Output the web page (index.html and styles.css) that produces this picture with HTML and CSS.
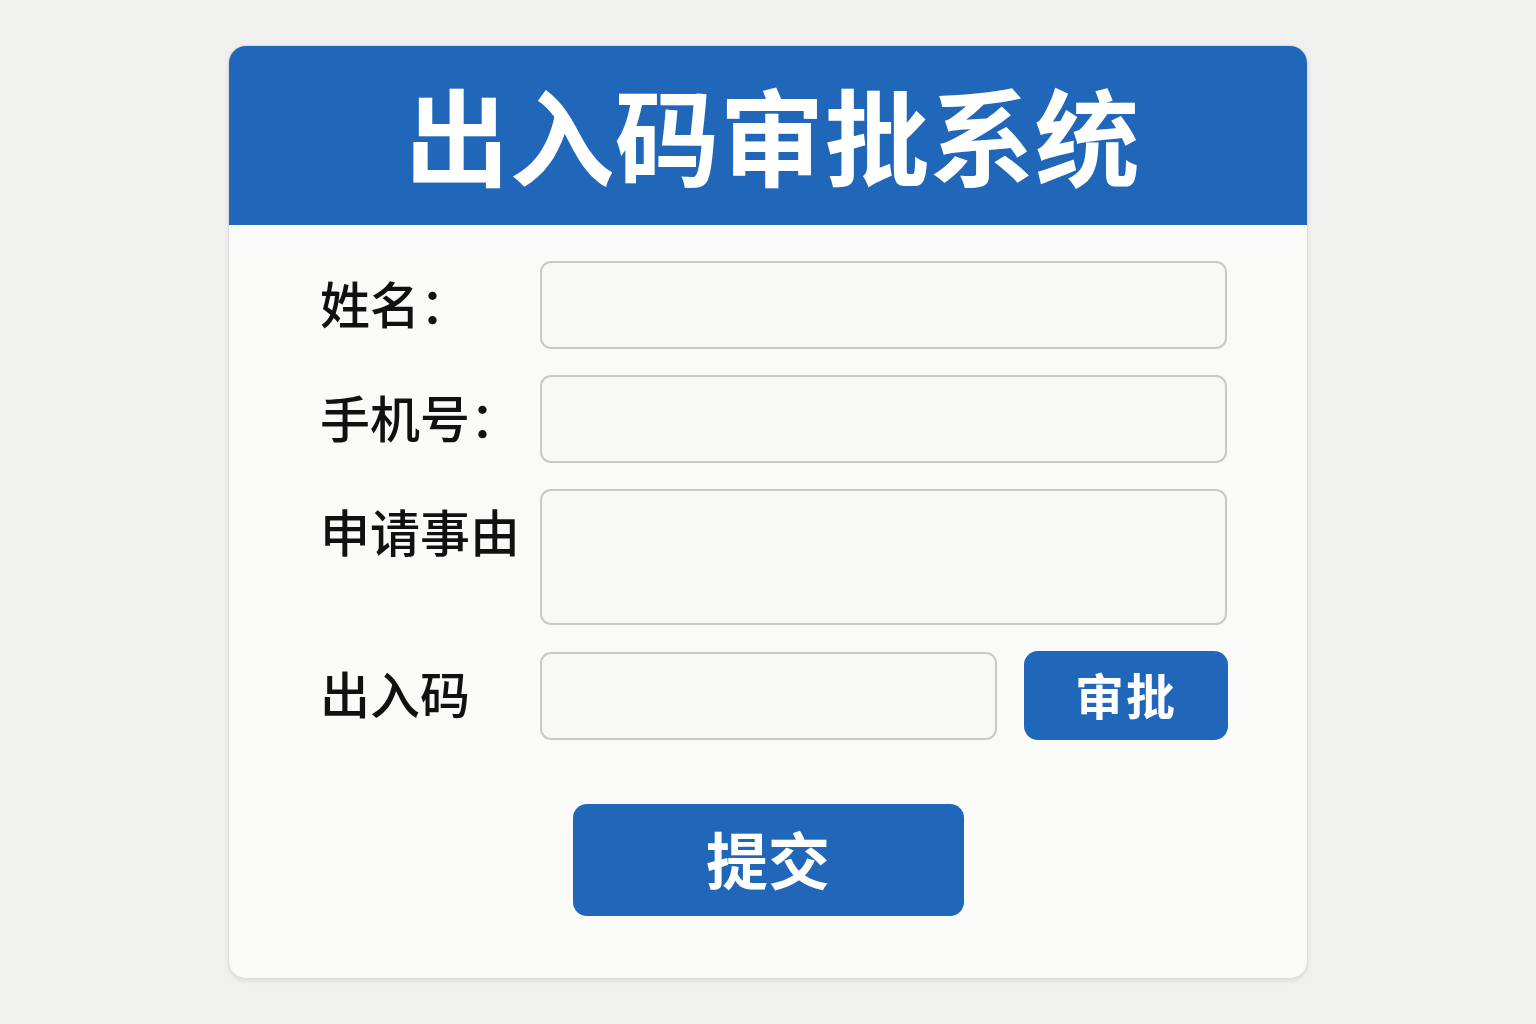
FILE: index.html
```html
<!DOCTYPE html>
<html lang="zh-CN">
<head>
    <meta charset="UTF-8">
    <meta name="viewport" content="width=device-width, initial-scale=1.0">
    <title>出入码审批系统</title>
    <link rel="stylesheet" href="styles.css">
</head>
<body>
    <div class="card">
        <div class="card-header">
            <h1>出入码审批系统</h1>
        </div>

        <form class="form" onsubmit="return false;">
            <div class="form-row">
                <label for="name">姓名：</label>
                <input type="text" id="name">
            </div>
            <div class="form-row">
                <label for="phone">手机号：</label>
                <input type="tel" id="phone">
            </div>
            <div class="form-row">
                <label for="reason">申请事由</label>
                <textarea id="reason"></textarea>
            </div>
            <div class="form-row">
                <label for="code">出入码</label>
                <div class="code-group">
                    <input type="text" id="code">
                    <button type="button" class="btn btn-approve">审批</button>
                </div>
            </div>

            <div class="actions">
                <button type="submit" class="btn btn-submit">提交</button>
            </div>
        </form>
    </div>
</body>
</html>
```

FILE: styles.css
```css
body {
    font-family: 'Noto Sans CJK SC', 'Noto Sans', sans-serif;
    display: flex;
    justify-content: center;
    align-items: center;
    min-height: 100vh;
    margin: 0;
    background-color: #f0f0ee;
}

.card {
    width: 1080px;
    height: 934px;
    box-sizing: border-box;
    background-color: #fafaf9;
    border: 1px solid #dcdcda;
    border-radius: 18px;
    box-shadow: 0 2px 4px rgba(0,0,0,0.08);
    overflow: hidden;
}

.card-header {
    height: 179px;
    background-color: #2067b9;
    display: flex;
    justify-content: center;
    align-items: center;
}

.card-header h1 {
    margin: 0;
    color: #fff;
    font-size: 105px;
    font-weight: 700;
    line-height: 1;
    padding: 0 0 6px 8px;
}

.form {
    padding: 36px 80px 0 91px;
}

.form-row {
    display: grid;
    grid-template-columns: 220px 1fr;
    margin-bottom: 26px;
}

label {
    font-size: 50px;
    font-weight: 500;
    color: #111;
    line-height: 82px;
    align-self: start;
}

input,
textarea {
    box-sizing: border-box;
    width: 100%;
    height: 88px;
    background-color: #f8f8f7;
    border: 2px solid #c9c9c8;
    border-radius: 11px;
    font-size: 28px;
    padding: 0 16px;
    font-family: inherit;
}

textarea {
    height: 136px;
    resize: none;
    padding: 12px 16px;
    display: block;
}

.code-group {
    display: flex;
    gap: 27px;
    align-items: center;
}

.code-group input {
    width: 457px;
}

.btn {
    font-family: inherit;
    background-color: #2067b9;
    color: #fff;
    border: none;
    cursor: pointer;
    font-weight: 700;
}

.btn-approve {
    width: 204px;
    height: 89px;
    border-radius: 14px;
    font-size: 49px;
    letter-spacing: 2px;
    line-height: 1;
    padding-bottom: 6px;
}

.actions {
    display: flex;
    justify-content: center;
    margin-top: 64px;
    margin-left: -11px;
}

.btn-submit {
    width: 391px;
    height: 112px;
    border-radius: 14px;
    font-size: 62px;
    line-height: 1;
    padding-bottom: 6px;
}
```
